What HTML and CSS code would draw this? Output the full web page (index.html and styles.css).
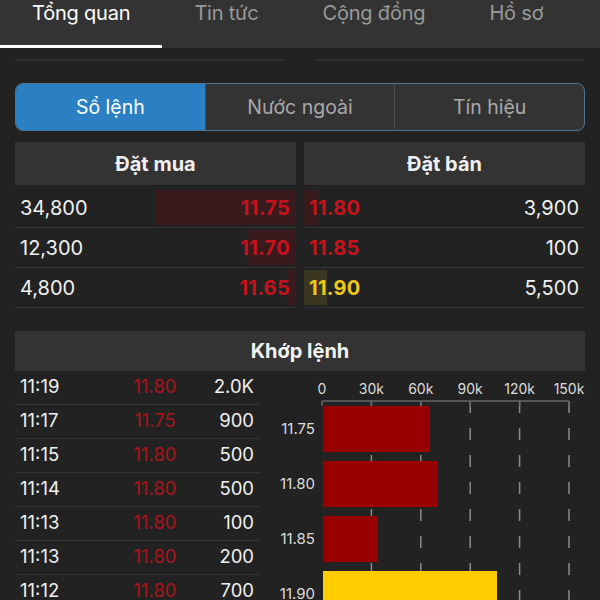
FILE: index.html
```html
<!DOCTYPE html>
<html lang="vi">
<head>
<meta charset="utf-8">
<link rel="stylesheet" href="styles.css">
</head>
<body>
<nav class="tabs">
  <div class="tab active">Tổng quan</div>
  <div class="tab">Tin tức</div>
  <div class="tab">Cộng đồng</div>
  <div class="tab">Hồ sơ</div>
</nav>
<div class="remnant"><span></span><span></span></div>
<div class="seg">
  <div class="seg-item on">Sổ lệnh</div>
  <div class="seg-item">Nước ngoài</div>
  <div class="seg-item">Tín hiệu</div>
</div>
<section class="book">
  <div class="side buy">
    <div class="head">Đặt mua</div>
    <div class="row"><span class="qty">34,800</span><span class="px red">11.75</span><i class="bar redbar" style="width:141px"></i></div>
    <div class="row"><span class="qty">12,300</span><span class="px red">11.70</span><i class="bar redbar" style="width:49px"></i></div>
    <div class="row"><span class="qty">4,800</span><span class="px red">11.65</span><i class="bar redbar" style="width:9px"></i></div>
  </div>
  <div class="side sell">
    <div class="head">Đặt bán</div>
    <div class="row"><span class="px red">11.80</span><span class="qty">3,900</span><i class="bar redbar" style="width:14px"></i></div>
    <div class="row"><span class="px red">11.85</span><span class="qty">100</span></div>
    <div class="row"><span class="px yellow">11.90</span><span class="qty">5,500</span><i class="bar ybar" style="width:23px"></i></div>
  </div>
</section>
<section class="match">
  <div class="mhead">Khớp lệnh</div>
  <div class="mbody">
    <div class="trades">
      <div class="trow"><span>11:19</span><span class="tp">11.80</span><span class="tv">2.0K</span></div>
      <div class="trow"><span>11:17</span><span class="tp">11.75</span><span class="tv">900</span></div>
      <div class="trow"><span>11:15</span><span class="tp">11.80</span><span class="tv">500</span></div>
      <div class="trow"><span>11:14</span><span class="tp">11.80</span><span class="tv">500</span></div>
      <div class="trow"><span>11:13</span><span class="tp">11.80</span><span class="tv">100</span></div>
      <div class="trow"><span>11:13</span><span class="tp">11.80</span><span class="tv">200</span></div>
      <div class="trow"><span>11:12</span><span class="tp">11.80</span><span class="tv">700</span></div>
    </div>
    <svg class="chart" width="330" height="229" viewBox="0 0 330 229">
      <g class="grid">
        <line x1="101.4" y1="30" x2="101.4" y2="229"/>
        <line x1="150.8" y1="30" x2="150.8" y2="229"/>
        <line x1="200.2" y1="30" x2="200.2" y2="229"/>
        <line x1="249.6" y1="30" x2="249.6" y2="229"/>
        <line x1="299" y1="30" x2="299" y2="229"/>
      </g>
      <line class="axis" x1="52" y1="30" x2="299" y2="30"/>
      <g class="ticks">
        <line x1="52" y1="30" x2="52" y2="35"/>
        <line x1="101.4" y1="30" x2="101.4" y2="35"/>
        <line x1="150.8" y1="30" x2="150.8" y2="35"/>
        <line x1="200.2" y1="30" x2="200.2" y2="35"/>
        <line x1="249.6" y1="30" x2="249.6" y2="35"/>
        <line x1="299" y1="30" x2="299" y2="35"/>
      </g>
      <g class="xl">
        <text x="52" y="23">0</text>
        <text x="101.4" y="23">30k</text>
        <text x="150.8" y="23">60k</text>
        <text x="200.2" y="23">90k</text>
        <text x="249.6" y="23">120k</text>
        <text x="299" y="23">150k</text>
      </g>
      <rect class="b-red" x="53" y="35" width="107" height="46"/>
      <rect class="b-red" x="53" y="90" width="115" height="46"/>
      <rect class="b-red" x="53" y="145" width="55" height="46"/>
      <rect class="b-yel" x="53" y="200" width="174" height="46"/>
      <g class="yl">
        <text x="45" y="63">11.75</text>
        <text x="45" y="118">11.80</text>
        <text x="45" y="173">11.85</text>
        <text x="45" y="228">11.90</text>
      </g>
    </svg>
  </div>
</section>
</body>
</html>
```
FILE: styles.css
```css
* { box-sizing: border-box; }
html, body { margin: 0; padding: 0; }
body {
  width: 600px;
  height: 600px;
  overflow: hidden;
  background: #222222;
  color: #f2f2f2;
  font-family: Inter, "Noto Sans", "DejaVu Sans", sans-serif;
}
.tabs {
  display: flex;
  height: 48px;
  background: #333333;
}
.tab {
  flex: none;
  padding: 0 32px;
  font-size: 20px;
  line-height: 27px;
  letter-spacing: -0.2px;
  color: #9a9a9a;
  height: 48px;
}
.tab.active {
  color: #ffffff;
  border-bottom: 3px solid #ffffff;
}
.remnant {
  display: flex;
  gap: 30px;
  padding: 11px 15px 0;
}
.remnant span {
  flex: 1;
  height: 2px;
  background: #2f2f2f;
}
.seg {
  display: flex;
  margin: 22px 15px 0;
  height: 48px;
  border: 1px solid #4d7799;
  border-radius: 8px;
  overflow: hidden;
  background: #333333;
}
.seg-item {
  flex: 1;
  display: flex;
  align-items: center;
  justify-content: center;
  font-size: 19.5px;
  color: #a8a8a8;
  border-left: 1px solid #4a4a4a;
}
.seg-item:first-child { border-left: none; }
.seg-item.on {
  background: #2b80c3;
  color: #ffffff;
}
.book {
  display: grid;
  grid-template-columns: 1fr 1fr;
  gap: 8px;
  margin: 11px 15px 0;
}
.head {
  height: 43px;
  margin-bottom: 3px;
  background: #333333;
  display: flex;
  align-items: center;
  justify-content: center;
  font-weight: 700;
  font-size: 20px;
  color: #f0f0f0;
}
.row {
  position: relative;
  display: flex;
  justify-content: space-between;
  align-items: center;
  height: 40px;
  border-bottom: 1px solid #333333;
  font-size: 20px;
}
.row span { position: relative; z-index: 1; }
.buy .row { padding: 0 6px 0 5px; }
.sell .row { padding: 0 6px 0 5px; }
.qty { color: #f0f0f0; }
.px { font-weight: 700; letter-spacing: 0.3px; }
.red { color: #c8121b; }
.yellow { color: #f1c61a; }
.bar {
  position: absolute;
  top: 2px;
  bottom: 2px;
}
.buy .bar { right: 0; }
.sell .bar { left: 0; }
.redbar { background: #3a1b1d; }
.ybar { background: #3b3620; }
.match { margin-top: 23px; }
.mhead {
  margin: 0 15px;
  height: 40px;
  background: #333333;
  display: flex;
  align-items: center;
  justify-content: center;
  font-weight: 700;
  font-size: 20px;
}
.mbody {
  display: flex;
  padding-left: 15px;
}
.trades {
  width: 245px;
  flex: none;
}
.trow {
  display: grid;
  grid-template-columns: 100px 70px 1fr;
  align-items: center;
  height: 34px;
  padding: 0 6px 3px 5px;
  border-bottom: 1px solid #333333;
  font-size: 18.5px;
  color: #f0f0f0;
}
.tp { color: #a8161b; text-align: center; }
.tv { text-align: right; }
.chart {
  flex: none;
  margin-left: 10px;
  display: block;
  overflow: visible;
}
.grid line {
  stroke: #8a8a8a;
  stroke-width: 1.5;
  stroke-dasharray: 12 15;
}
.axis { stroke: #666666; stroke-width: 1.5; }
.ticks line { stroke: #666666; stroke-width: 1.5; }
.xl text {
  fill: #dddddd;
  font-size: 14px;
  text-anchor: middle;
  font-family: Inter, "Noto Sans", sans-serif;
}
.yl text {
  fill: #dddddd;
  font-size: 15px;
  text-anchor: end;
  font-family: Inter, "Noto Sans", sans-serif;
}
.b-red { fill: #990000; }
.b-yel { fill: #ffcc00; }
```
